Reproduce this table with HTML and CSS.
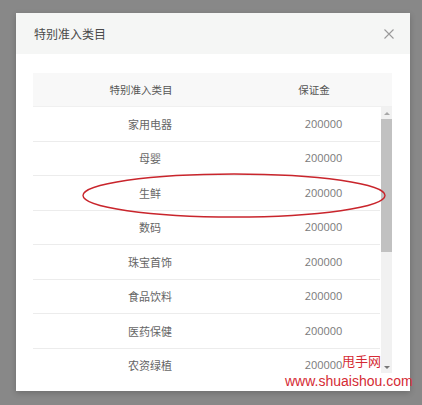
FILE: index.html
```html
<!DOCTYPE html>
<html lang="zh-CN">
<head>
<meta charset="utf-8">
<link rel="stylesheet" href="styles.css">
</head>
<body>
<div class="modal">
  <div class="modal-head">
    <span class="title">特别准入类目</span>
    <svg class="close" width="10" height="10" viewBox="0 0 10 10"><path d="M0.5 0.5L9.5 9.5M9.5 0.5L0.5 9.5" stroke="#9a9a9a" stroke-width="1.1" fill="none"/></svg>
  </div>
  <div class="modal-body">
    <div class="thead">
      <div class="th">特别准入类目</div>
      <div class="th th2">保证金</div>
    </div>
    <div class="tbody-wrap">
      <div class="tbody">
        <div class="row"><span class="cell">家用电器</span><span class="cell num">200000</span></div>
        <div class="row"><span class="cell">母婴</span><span class="cell num">200000</span></div>
        <div class="row"><span class="cell">生鲜</span><span class="cell num">200000</span></div>
        <div class="row"><span class="cell">数码</span><span class="cell num">200000</span></div>
        <div class="row"><span class="cell">珠宝首饰</span><span class="cell num">200000</span></div>
        <div class="row"><span class="cell">食品饮料</span><span class="cell num">200000</span></div>
        <div class="row"><span class="cell">医药保健</span><span class="cell num">200000</span></div>
        <div class="row"><span class="cell">农资绿植</span><span class="cell num">200000</span></div>
      </div>
      <div class="scrollbar">
        <div class="sb-btn"><span class="arrow-up"></span></div>
        <div class="thumb"></div>
        <div class="sb-rest"></div>
        <div class="sb-btn"><span class="arrow-down"></span></div>
      </div>
    </div>
  </div>
</div>
<svg class="mark" width="310" height="50" viewBox="0 0 310 50"><ellipse cx="155" cy="24.5" rx="151" ry="21.5" fill="none" stroke="#c9252c" stroke-width="1.4"/></svg>
<div class="wm">
  <div class="wm-cn">甩手网</div>
  <div class="wm-url">www.shuaishou.com</div>
</div>
</body>
</html>
```

FILE: styles.css
```css
html, body {
  margin: 0;
  padding: 0;
}
body {
  position: relative;
  width: 422px;
  height: 405px;
  background: #888888;
  font-family: "Noto Sans CJK SC", "Noto Sans", sans-serif;
  overflow: hidden;
}
.modal {
  margin: 13px 0 0 16px;
  width: 394px;
  height: 378px;
  background: #fff;
  box-shadow: 0 2px 6px rgba(0,0,0,0.2);
  display: flex;
  flex-direction: column;
}
.modal-head {
  height: 41px;
  background: #f5f6f5;
  display: flex;
  align-items: center;
  justify-content: space-between;
  padding: 0 16px 0 18px;
}
.title {
  font-size: 12px;
  color: #4a4a4a;
}
.close {
  display: block;
  margin-top: 1px;
}
.modal-body {
  padding: 19px 18px 0 17px;
}
.thead {
  height: 34px;
  background: #f8f8f8;
  display: grid;
  grid-template-columns: 216px 1fr;
  align-items: center;
  border-bottom: 1px solid #f0f0f0;
  box-sizing: border-box;
}
.th {
  text-align: center;
  font-size: 10.5px;
  color: #555;
}
.th2 {
  padding-right: 13px;
}
.tbody-wrap {
  display: flex;
  height: 266px;
  overflow: hidden;
}
.tbody {
  width: 347px;
}
.row {
  height: 34.5px;
  box-sizing: border-box;
  border-bottom: 1px solid #ececec;
  display: grid;
  grid-template-columns: 234px 1fr;
  align-items: center;
}
.cell {
  text-align: center;
  font-size: 11px;
  line-height: 12px;
  color: #666;
}
.num {
  font-family: "Open Sans", "Noto Sans", sans-serif;
  font-size: 11px;
  color: #7a7a7a;
}
.scrollbar {
  width: 11px;
  margin-left: 1px;
  background: #f1f1f1;
  display: flex;
  flex-direction: column;
}
.sb-btn {
  height: 12px;
  display: flex;
  align-items: center;
  justify-content: center;
}
.arrow-up {
  width: 0;
  height: 0;
  border-left: 3px solid transparent;
  border-right: 3px solid transparent;
  border-bottom: 3px solid #a8a8a8;
}
.arrow-down {
  width: 0;
  height: 0;
  border-left: 3px solid transparent;
  border-right: 3px solid transparent;
  border-top: 3px solid #777;
}
.thumb {
  height: 133px;
  background: #c1c1c1;
}
.sb-rest {
  flex: 1;
}
.mark {
  position: absolute;
  left: 79px;
  top: 171px;
}
.wm {
  position: absolute;
  left: 285px;
  top: 353px;
  color: #d52b34;
}
.wm-cn {
  font-family: "Noto Sans CJK SC", sans-serif;
  font-size: 13px;
  line-height: 15px;
  margin-left: 57px;
}
.wm-url {
  font-family: "Liberation Sans", Arial, sans-serif;
  font-size: 14px;
  line-height: 15px;
  margin-top: 6px;
}
```
